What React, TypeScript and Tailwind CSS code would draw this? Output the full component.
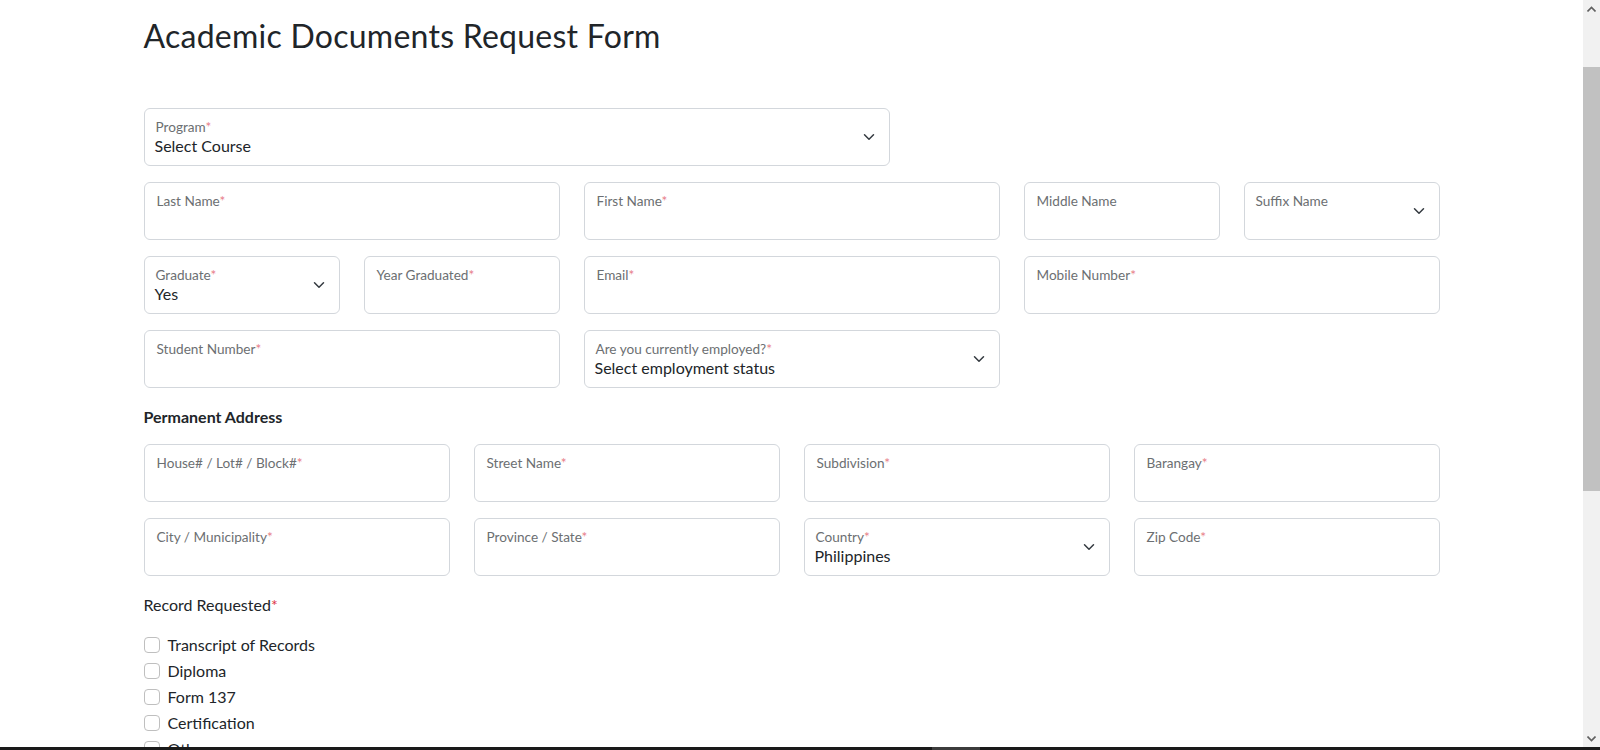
import React from "react";

const FONT = { fontFamily: '"Lato", "Open Sans", sans-serif' };

function Chevron() {
  return (
    <svg width="16" height="12" viewBox="0 0 16 16" className="shrink-0">
      <path d="m2 5 6 6 6-6" fill="none" stroke="#343a40" strokeWidth="2" strokeLinecap="round" strokeLinejoin="round" />
    </svg>
  );
}

function Label({ text, required }: { text: string; required?: boolean }) {
  return (
    <div className="text-[13.6px] leading-[16px] text-[#6c6f72] whitespace-nowrap">
      {text}
      {required && <span className="text-[#e77b86]">*</span>}
    </div>
  );
}

function Field({ label, required, span }: { label: string; required?: boolean; span: string }) {
  return (
    <div className={`${span} h-[58px] rounded-[6px] border border-[#d3d7dc] bg-white pl-[12px] pt-[10px]`}>
      <Label text={label} required={required} />
    </div>
  );
}

function Select({
  label,
  required,
  value,
  span,
}: {
  label: string;
  required?: boolean;
  value?: string;
  span: string;
}) {
  return (
    <div className={`${span} h-[58px] rounded-[6px] border border-[#d3d7dc] bg-white flex items-center pr-[12px]`}>
      <div className="flex-1 self-stretch pt-[10px] pl-[11px]">
        <Label text={label} required={required} />
        {value && <div className="text-[16px] leading-[22px] text-[#212529] -ml-[1px]">{value}</div>}
      </div>
      <Chevron />
    </div>
  );
}

function Check({ label }: { label: string }) {
  return (
    <div className="flex items-center h-[24px] mb-[2px]">
      <span className="w-4 h-4 rounded-[4px] border border-[#bfbfbf] bg-white" />
      <span className="ml-2 text-[16px] text-[#212529]">{label}</span>
    </div>
  );
}

function Scrollbar() {
  return (
    <div className="w-[17px] h-full bg-[#f1f1f1] flex flex-col">
      <div className="h-[17px] flex items-center justify-center">
        <svg width="9" height="6" viewBox="0 0 9 6">
          <path d="M0.5 5.5 4.5 1.5 8.5 5.5" fill="none" stroke="#606060" strokeWidth="1.6" />
        </svg>
      </div>
      <div className="h-[50px]" />
      <div className="h-[424px] bg-[#c1c1c1]" />
      <div className="flex-1" />
      <div className="h-[17px] flex items-center justify-center">
        <svg width="9" height="6" viewBox="0 0 9 6">
          <path d="M0.5 0.5 4.5 4.5 8.5 0.5" fill="none" stroke="#606060" strokeWidth="1.6" />
        </svg>
      </div>
    </div>
  );
}

export default function App() {
  return (
    <div className="w-[1600px] h-[750px] flex flex-col bg-white overflow-hidden" style={FONT}>
      <div className="flex h-[747px]">
        <div className="flex-1 overflow-hidden">
          <div className="max-w-[1320px] mx-auto px-3 pt-[17px]">
            <h2 className="text-[32px] leading-[38px] font-normal tracking-[0.25px] text-[#212529] mb-[53px]">
              Academic Documents Request Form
            </h2>

            <div className="grid grid-cols-12 gap-x-6 gap-y-4">
              <Select span="col-span-7" label="Program" required value="Select Course" />
              <div className="col-span-5" />

              <Field span="col-span-4" label="Last Name" required />
              <Field span="col-span-4" label="First Name" required />
              <Field span="col-span-2" label="Middle Name" />
              <Select span="col-span-2" label="Suffix Name" />

              <Select span="col-span-2" label="Graduate" required value="Yes" />
              <Field span="col-span-2" label="Year Graduated" required />
              <Field span="col-span-4" label="Email" required />
              <Field span="col-span-4" label="Mobile Number" required />

              <Field span="col-span-4" label="Student Number" required />
              <Select span="col-span-4" label="Are you currently employed?" required value="Select employment status" />
            </div>

            <div className="mt-[17px] mb-[15px] text-[16px] leading-[24px] font-bold text-[#212529]">
              Permanent Address
            </div>

            <div className="grid grid-cols-12 gap-x-6 gap-y-4">
              <Field span="col-span-3" label="House# / Lot# / Block#" required />
              <Field span="col-span-3" label="Street Name" required />
              <Field span="col-span-3" label="Subdivision" required />
              <Field span="col-span-3" label="Barangay" required />

              <Field span="col-span-3" label="City / Municipality" required />
              <Field span="col-span-3" label="Province / State" required />
              <Select span="col-span-3" label="Country" required value="Philippines" />
              <Field span="col-span-3" label="Zip Code" required />
            </div>

            <div className="mt-[17px] text-[16px] leading-[24px] text-[#212529]">
              Record Requested<span className="text-[#dc3545]">*</span>
            </div>

            <div className="mt-4">
              <Check label="Transcript of Records" />
              <Check label="Diploma" />
              <Check label="Form 137" />
              <Check label="Certification" />
              <Check label="Others" />
            </div>
          </div>
        </div>
        <Scrollbar />
      </div>
      <div className="h-[3px] bg-[#1a1a1a] flex">
        <div className="w-[932px]" />
        <div className="w-[48px] bg-[#3c3c3c]" />
        <div className="flex-1" />
      </div>
    </div>
  );
}
